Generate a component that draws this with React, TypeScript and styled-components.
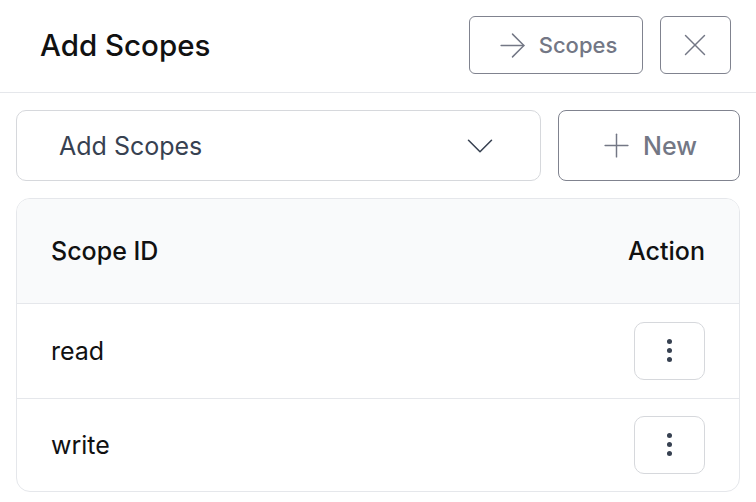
import styled, { createGlobalStyle } from 'styled-components'
import { ArrowRight, X, ChevronDown, Plus, EllipsisVertical } from 'lucide-react'

const GlobalStyle = createGlobalStyle`
  html, body {
    margin: 0;
    padding: 0;
    background: #ffffff;
  }
  body {
    font-family: Inter, Roboto, "Liberation Sans", sans-serif;
    color: #111827;
  }
  * {
    box-sizing: border-box;
  }
`

const scopes = ['read', 'write']

const App = () => {
  return (
    <>
      <GlobalStyle />
      <Panel>
        <Header>
          <Title>Add Scopes</Title>
          <HeaderActions>
            <OutlineButton $width={174}>
              <ArrowRight size={39} strokeWidth={0.9} />
              Scopes
            </OutlineButton>
            <OutlineButton $width={71}>
              <X size={38} strokeWidth={0.9} />
            </OutlineButton>
          </HeaderActions>
        </Header>
        <Body>
          <Toolbar>
            <Select>
              <SelectText>Add Scopes</SelectText>
              <ChevronDown size={46} strokeWidth={0.8} color="#374151" />
            </Select>
            <NewButton>
              <Plus size={39} strokeWidth={0.9} />
              New
            </NewButton>
          </Toolbar>
          <Table>
            <HeadRow>
              <HeadCell>Scope ID</HeadCell>
              <HeadCell>Action</HeadCell>
            </HeadRow>
            {scopes.map((scope) => (
              <Row key={scope}>
                <Cell>{scope}</Cell>
                <MenuButton>
                  <EllipsisVertical size={31} strokeWidth={1.9} color="#374151" />
                </MenuButton>
              </Row>
            ))}
          </Table>
        </Body>
      </Panel>
    </>
  )
}

export default App

const Panel = styled.div`
  width: 756px;
  height: 502px;
  background: #fff;
  display: flex;
  flex-direction: column;
`
const Header = styled.div`
  display: flex;
  align-items: center;
  justify-content: space-between;
  height: 93px;
  padding: 0 25px 2px 40px;
  border-bottom: 1px solid #e5e7eb;
`
const Title = styled.h1`
  margin: 0;
  font-size: 29.5px;
  font-weight: 500;
  color: #111;
`
const HeaderActions = styled.div`
  display: flex;
  gap: 17px;
`
const OutlineButton = styled.button<{ $width: number }>`
  display: flex;
  align-items: center;
  justify-content: center;
  gap: 7px;
  width: ${(p) => p.$width}px;
  height: 58px;
  border: 1.5px solid #80838f;
  border-radius: 6px;
  background: #fff;
  color: #737785;
  font-family: inherit;
  font-size: 22px;
  font-weight: 500;
  padding: 0 2px 0 0;
`
const Body = styled.div`
  display: flex;
  flex-direction: column;
  gap: 17px;
  padding: 17px 16px 0 16px;
`
const Toolbar = styled.div`
  display: flex;
  gap: 17px;
`
const Select = styled.div`
  flex: 1;
  height: 71px;
  display: flex;
  align-items: center;
  justify-content: space-between;
  padding: 0 37px 0 42px;
  border: 1.5px solid #d6d8dc;
  border-radius: 10px;
`
const SelectText = styled.span`
  font-size: 25px;
  color: #374151;
`
const NewButton = styled.button`
  width: 182px;
  height: 71px;
  display: flex;
  align-items: center;
  justify-content: center;
  gap: 7px;
  border: 1.5px solid #80838f;
  border-radius: 8px;
  background: #fff;
  color: #737785;
  font-family: inherit;
  font-size: 25px;
  font-weight: 500;
  padding: 0 4px 0 0;
`
const Table = styled.div`
  display: flex;
  flex-direction: column;
  border: 1.5px solid #e5e7eb;
  border-radius: 14px;
  overflow: hidden;
`
const HeadRow = styled.div`
  display: flex;
  align-items: center;
  justify-content: space-between;
  height: 105px;
  padding: 0 34px;
  background: #f9fafb;
  border-bottom: 1.5px solid #e5e7eb;
`
const HeadCell = styled.span`
  font-size: 25px;
  font-weight: 500;
  color: #111;
`
const Row = styled.div`
  display: flex;
  align-items: center;
  justify-content: space-between;
  height: 93.5px;
  padding: 0 34px;
  & + & {
    border-top: 1.5px solid #e5e7eb;
  }
`
const Cell = styled.span`
  font-size: 25px;
  color: #111;
`
const MenuButton = styled.button`
  width: 71px;
  height: 58px;
  display: flex;
  align-items: center;
  justify-content: center;
  border: 1.5px solid #d6d8dc;
  border-radius: 10px;
  background: #fff;
  padding: 0;
`
